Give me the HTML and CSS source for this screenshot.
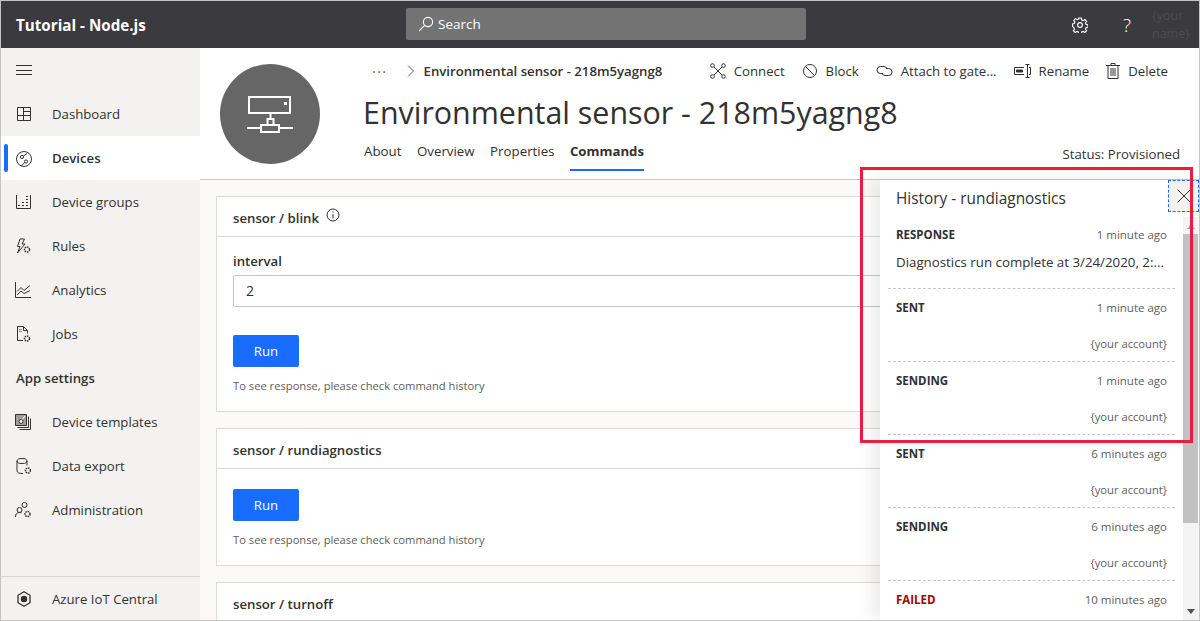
FILE: index.html
```html
<!DOCTYPE html>
<html lang="en">
<head>
    <meta charset="UTF-8">
    <title>Environmental sensor - 218m5yagng8</title>
    <link rel="stylesheet" href="styles.css">
</head>
<body>
<div class="app">
    <header class="topbar">
        <div class="app-name">Tutorial - Node.js</div>
        <div class="search">
            <svg class="search-ico" width="16" height="16" viewBox="0 0 16 16" fill="none" stroke="#fff" stroke-width="1.1"><circle cx="10" cy="6" r="4.6"/><path d="M6.6 9.4 1 15"/></svg>
            <span>Search</span>
        </div>
        <div class="top-tools">
            <svg width="16" height="16" viewBox="0 0 16 16" fill="none" stroke="#fff" stroke-width="1.1"><circle cx="8" cy="8" r="2.4"/><path d="M6.7 1h2.6l.4 2 1.4.6 1.8-1.1 1.7 1.8-1.1 1.7.6 1.4 1.9.4v2.4l-1.9.4-.6 1.4 1.1 1.7-1.7 1.8-1.8-1.1-1.4.6-.4 1.9H6.7l-.4-1.9-1.4-.6-1.8 1.1-1.7-1.8 1.1-1.7-.6-1.4L.4 9.3V6.9l1.9-.4.6-1.4-1.1-1.7 1.7-1.8 1.8 1.1 1.4-.6z"/></svg>
            <span class="help">?</span>
            <span class="user">{your<br>name}</span>
        </div>
    </header>
    <div class="body">
        <nav class="sidebar">
            <div class="burger"><svg width="16" height="11" viewBox="0 0 16 11" stroke="#323130"><path d="M0 .5h16M0 5.500h16M0 9.500h16"/></svg></div>
            <a class="nav-item"><svg class="nav-ico" width="16" height="16" viewBox="0 0 16 16" fill="none" stroke="#323130"><path d="M2.500 1.500h13v13h-13zM2.500 9.500h13M8.500 1.500v13M8.500 5.500h7"/></svg>Dashboard</a>
            <a class="nav-item active"><svg class="nav-ico" width="18" height="18" viewBox="0 0 18 18" fill="none" stroke="#323130"><circle cx="9" cy="9" r="7.500"/><circle cx="7" cy="7" r="1.600"/><circle cx="11" cy="11.500" r="1.600"/><path d="M8.500 6 12 3.500M9.800 12.500 6 16"/></svg>Devices</a>
            <a class="nav-item"><svg class="nav-ico" width="16" height="16" viewBox="0 0 16 16" fill="none" stroke="#323130"><path d="M1.500 1v13.500h14V1"/><path stroke-dasharray="2 2" d="M3 11.500h11M7 8.500h7M11 5.500h3M11 2.500h3"/></svg>Device groups</a>
            <a class="nav-item"><svg class="nav-ico" width="16" height="16" viewBox="0 0 16 16" fill="none" stroke="#323130"><path d="M5 1h4.500L7 6h3l-7.500 9L5 8.500H2.500z"/><circle cx="12" cy="11.500" r="2.500" stroke-width="1.500" stroke-dasharray="1.500 .8"/></svg>Rules</a>
            <a class="nav-item"><svg class="nav-ico" width="16" height="16" viewBox="0 0 16 16" fill="none" stroke="#323130"><path d="M.5 0v15.500h16M2 9.500l4-4 3 3 6-5M2 13l4-4 3 2.500 6-3"/></svg>Analytics</a>
            <a class="nav-item"><svg class="nav-ico" width="16" height="16" viewBox="0 0 16 16" fill="none" stroke="#323130"><path d="M8 14.500H2.500V.5h6l4 4v3M8.500.5v4h4"/><path stroke="#888" d="M4 3.500h3M4 5.500h3"/><circle cx="12" cy="12.500" r="2.500" stroke-width="1.500" stroke-dasharray="1.500 .8"/></svg>Jobs</a>
            <div class="nav-title">App settings</div>
            <a class="nav-item"><svg class="nav-ico" width="16" height="16" viewBox="0 0 16 16" fill="none" stroke="#323130"><path fill="#a19f9d" d="M.5.500h11v11H.5z"/><path d="M13.500 2.500v11h-11M15.500 4.500v11h-11"/><circle cx="6" cy="7.500" r="2" fill="#fff"/><path stroke="#fff" d="M7 5.500 10 2"/></svg>Device templates</a>
            <a class="nav-item"><svg class="nav-ico" width="16" height="16" viewBox="0 0 16 16" fill="none" stroke="#323130"><ellipse cx="7" cy="3" rx="5" ry="2.500"/><path d="M2 3v10c0 1.300 2 2.500 5 2.500h1M12 3v4.500"/><circle cx="13" cy="12.500" r="2.500" stroke-width="1.500" stroke-dasharray="1.500 .8"/></svg>Data export</a>
            <a class="nav-item"><svg class="nav-ico" width="16" height="16" viewBox="0 0 16 16" fill="none" stroke="#323130"><circle cx="9.500" cy="3" r="2.500"/><circle cx="4.500" cy="8" r="2.500"/><path d="M.5 15c0-3 1.500-4.500 4-4.500 1 0 1.500.2 2 .5"/><circle cx="12.500" cy="12" r="2.500" stroke-width="1.500" stroke-dasharray="1.500 .8"/></svg>Administration</a>
            <a class="nav-item nav-foot"><svg class="nav-ico" width="16" height="16" viewBox="0 0 16 16" fill="none" stroke="#323130" stroke-width="1.300"><path d="M9 .8l6 3.500v7.400L9 15.200l-6-3.500V4.300z"/><circle cx="9" cy="8" r="2.600" fill="#323130"/></svg>Azure IoT Central</a>
        </nav>
        <main class="main">
            <section class="device-head">
                <div class="avatar">
                    <svg width="46" height="38" viewBox="0 0 46 38" fill="none" stroke="#fff" stroke-width="2"><path d="M2 2h41v16H2zM23.500 18v6M20.500 30v-6h6v6M14 37v-7h18v7zM0 33h14M32 33h14"/><path d="M37 7h3v3h-3z" fill="#fff" stroke="none"/></svg>
                </div>
                <div class="head-info">
                    <div class="crumb-row">
                        <div class="crumbs">
                            <span class="dots">···</span>
                            <svg width="10" height="14" viewBox="0 0 10 14" fill="none" stroke="#605e5c"><path d="M3 1.500l5.500 5.500L3 12.500"/></svg>
                            <span>Environmental sensor - 218m5yagng8</span>
                        </div>
                        <div class="actions">
                            <a class="action"><svg width="16" height="16" viewBox="0 0 16 16" fill="none" stroke="#323130"><circle cx="2.500" cy="2.500" r="1.800"/><circle cx="13.500" cy="2.500" r="1.800"/><circle cx="2.500" cy="13.500" r="1.800"/><circle cx="13.500" cy="13.500" r="1.800"/><path d="M4 4l8 8M12 4l-8 8"/></svg>Connect</a>
                            <a class="action"><svg width="16" height="16" viewBox="0 0 16 16" fill="none" stroke="#323130"><circle cx="8" cy="8" r="6.500"/><path d="M3.500 3.500l9 9"/></svg>Block</a>
                            <a class="action"><svg width="17" height="12" viewBox="0 0 17 12" fill="none" stroke="#323130"><path d="M7 8.500H4.500a3.500 3.500 0 0 1 0-7H8a3.500 3.500 0 0 1 3 2"/><path d="M10 3.500h2.500a3.500 3.500 0 0 1 0 7H9a3.500 3.500 0 0 1-3-2"/></svg>Attach to gate...</a>
                            <a class="action"><svg width="17" height="14" viewBox="0 0 17 14" fill="none" stroke="#323130"><path d="M10 3.500H.5v7H10"/><path fill="#323130" d="M2.500 6h6v2h-6z"/><path d="M13.500 1v12M11.500.5h4M11.500 13.500h4M15 3.500h1.500v7H15"/></svg>Rename</a>
                            <a class="action"><svg width="14" height="16" viewBox="0 0 14 16" fill="none" stroke="#323130"><path d="M0 2.500h14M5 2.500v-2h4v2M2 2.500v13h10v-13M5 5v8M7 5v8M9 5v8"/></svg>Delete</a>
                        </div>
                    </div>
                    <h1 class="title">Environmental sensor - 218m5yagng8</h1>
                    <div class="tab-row">
                        <div class="tabs">
                            <a class="tab">About</a>
                            <a class="tab">Overview</a>
                            <a class="tab">Properties</a>
                            <a class="tab current">Commands</a>
                        </div>
                        <div class="status">Status: Provisioned</div>
                    </div>
                </div>
            </section>
            <section class="content">
                <div class="card">
                    <div class="card-head">sensor / blink
                        <svg class="info" width="14" height="14" viewBox="0 0 14 14" fill="none" stroke="#323130"><circle cx="7" cy="7" r="6"/><path d="M7 6v4.500M7 3.500v1.200"/></svg>
                    </div>
                    <div class="card-body">
                        <label class="field-label">interval</label>
                        <div class="field">2</div>
                        <button class="run">Run</button>
                        <p class="hint">To see response, please check command history</p>
                    </div>
                </div>
                <div class="card">
                    <div class="card-head">sensor / rundiagnostics</div>
                    <div class="card-body">
                        <button class="run no-field">Run</button>
                        <p class="hint">To see response, please check command history</p>
                    </div>
                </div>
                <div class="card">
                    <div class="card-head">sensor / turnoff</div>
                </div>
            </section>
        </main>
    </div>

    <aside class="history">
        <div class="history-title">History - rundiagnostics</div>
        <button class="close"><svg width="14" height="14" viewBox="0 0 14 14" stroke="#323130"><path d="M.5.500l13 13M13.500.500l-13 13"/></svg></button>
        <div class="history-scroll">
            <div class="entry">
                <div class="entry-top"><b>RESPONSE</b><span>1 minute ago</span></div>
                <div class="entry-msg">Diagnostics run complete at 3/24/2020, 2:...</div>
            </div>
            <div class="entry">
                <div class="entry-top"><b>SENT</b><span>1 minute ago</span></div>
                <div class="entry-who">{your account}</div>
            </div>
            <div class="entry">
                <div class="entry-top"><b>SENDING</b><span>1 minute ago</span></div>
                <div class="entry-who">{your account}</div>
            </div>
            <div class="entry">
                <div class="entry-top"><b>SENT</b><span>6 minutes ago</span></div>
                <div class="entry-who">{your account}</div>
            </div>
            <div class="entry">
                <div class="entry-top"><b>SENDING</b><span>6 minutes ago</span></div>
                <div class="entry-who">{your account}</div>
            </div>
            <div class="entry">
                <div class="entry-top"><b class="failed">FAILED</b><span>10 minutes ago</span></div>
            </div>
        </div>
        <div class="scrollbar">
            <svg width="8" height="5" viewBox="0 0 8 5" fill="#a6a6a6"><path d="M4 0l4 5H0z"/></svg>
            <div class="thumb"></div>
            <svg class="arrow-down" width="8" height="5" viewBox="0 0 8 5" fill="#505050"><path d="M0 0h8L4 5z"/></svg>
        </div>
    </aside>
    <div class="highlight"></div>
</div>
</body>
</html>
```

FILE: styles.css
```css
*{
    margin: 0;
    padding: 0;
    box-sizing: border-box;
}
html,body{
    height: 100%;
    overflow: hidden;
}
body{
    font-family: "Open Sans", "Liberation Sans", sans-serif;
    font-size: 13.2px;
    color: #323130;
}
.app{
    width: 1200px;
    height: 621px;
    position: relative;
    overflow: hidden;
    border: 1px solid #c4c4c4;
    display: flex;
    flex-direction: column;
}

/* top bar */
.topbar{
    height: 47px;
    flex: none;
    background: #3b3a3f;
    color: #fff;
    display: flex;
    align-items: center;
}
.app-name{
    width: 405px;
    padding-left: 15px;
    font-size: 15.2px;
    font-weight: 700;
}
.search{
    width: 400px;
    height: 32px;
    margin-top: -1px;
    background: #737373;
    border-radius: 2px;
    display: flex;
    align-items: center;
    padding-left: 12px;
    gap: 4px;
    font-size: 13.5px;
}
.top-tools{
    flex: 1;
    display: flex;
    align-items: center;
    padding-left: 266px;
}
.help{
    margin-left: 35px;
    font-size: 19px;
    font-weight: 300;
}
.user{
    margin-left: 21px;
    color: #4e4d52;
    font-size: 12.5px;
    line-height: 18px;
}

/* sidebar */
.body{
    flex: 1;
    display: flex;
    min-height: 0;
}
.sidebar{
    width: 199px;
    flex: none;
    background: #f3f2f1;
    display: flex;
    flex-direction: column;
}
.burger{
    height: 44px;
    padding: 1px 0 0 15px;
    display: flex;
    align-items: center;
}
.nav-item{
    height: 44px;
    flex: none;
    display: flex;
    align-items: center;
    padding-left: 51px;
    position: relative;
}
.nav-ico{
    position: absolute;
    left: 14px;
    top: 14px;
}
.nav-item.active{
    background: #fff;
    font-weight: 600;
}
.nav-item.active::before{
    content: "";
    position: absolute;
    left: 3px;
    top: 8px;
    width: 4px;
    height: 28px;
    border-radius: 2px;
    background: #1a6cff;
}
.nav-title{
    height: 44px;
    flex: none;
    display: flex;
    align-items: center;
    padding-left: 15px;
    font-weight: 600;
}
.nav-foot{
    margin-top: auto;
    border-top: 1px solid #d8d7d6;
}

/* device header */
.main{
    flex: 1;
    min-width: 0;
    display: flex;
    flex-direction: column;
}
.device-head{
    height: 132px;
    flex: none;
    background: #fff;
    border-bottom: 1px solid #c8c6c4;
    display: flex;
    padding: 16px 19px 0 20px;
    gap: 43px;
}
.avatar{
    width: 100px;
    height: 100px;
    flex: none;
    border-radius: 50%;
    background: #666;
    display: flex;
    align-items: center;
    justify-content: center;
}
.head-info{
    flex: 1;
    min-width: 0;
    margin-top: -8px;
}
.crumb-row{
    display: flex;
    justify-content: space-between;
    align-items: center;
    height: 30px;
    padding-right: 12px;
}
.crumbs{
    display: flex;
    align-items: center;
    font-weight: 600;
    font-size: 13.2px;
    gap: 9px;
}
.dots{
    font-weight: 400;
    color: #605e5c;
    margin: 0 8px 0 9px;
    font-size: 14px;
    letter-spacing: 1.5px;
}
.actions{
    display: flex;
    align-items: center;
    gap: 17px;
}
.action{
    display: flex;
    align-items: center;
    gap: 8px;
}
.title{
    font-size: 30.4px;
    font-weight: 400;
    line-height: 42px;
    margin-top: 6px;
}
.tab-row{
    display: flex;
    justify-content: space-between;
    margin-top: 3px;
}
.tabs{
    display: flex;
    gap: 15.5px;
    padding-left: 1px;
}
.tab{
    height: 34px;
    line-height: 28px;
    font-size: 13.3px;
}
.tab.current{
    font-size: 13.2px;
    font-weight: 700;
    border-bottom: 2px solid #1a6cff;
}
.status{
    margin-top: 5px;
    line-height: 24px;
}

/* command cards */
.content{
    flex: 1;
    min-height: 0;
    overflow: hidden;
    background: #faf9f8;
    padding: 16px 16px 0;
    display: flex;
    flex-direction: column;
    gap: 16px;
}
.card{
    flex: none;
    background: #fff;
    border: 1px solid #dcdbda;
}
.card-head{
    height: 40px;
    padding: 3px 16px 0;
    display: flex;
    align-items: center;
    gap: 7px;
    font-weight: 600;
    border-bottom: 1px solid #dcdbda;
}
.info{
    margin-top: -6px;
}
.card-body{
    padding: 14px 16px 16px;
}
.field-label{
    display: block;
    font-weight: 600;
    line-height: 20px;
}
.field{
    margin-top: 4px;
    height: 32px;
    border: 1px solid #c8c6c4;
    border-radius: 2px;
    padding-left: 12px;
    font-size: 14px;
    line-height: 30px;
}
.run{
    display: block;
    width: 66px;
    height: 32px;
    margin-top: 28px;
    background: #1a6cff;
    color: #fff;
    border: 0;
    border-radius: 2px;
    font: inherit;
}
.run.no-field{
    margin-top: 6px;
}
.hint{
    margin-top: 10px;
    font-size: 11.2px;
    line-height: 18px;
    color: #605e5c;
}

/* history flyout, over the cards */
.history{
    position: absolute;
    left: 879px;
    top: 179px;
    right: 0;
    bottom: 0;
    background: #fff;
    box-shadow: -8px 0 16px rgba(0,0,0,0.08);
}
.history-title{
    font-size: 15.4px;
    line-height: 37px;
    height: 36px;
    padding-left: 16px;
}
.close{
    position: absolute;
    right: 0;
    top: 0;
    width: 31px;
    height: 32px;
    background: #f3f2f1;
    border: 1px dashed #1a6cff;
    display: flex;
    align-items: center;
    justify-content: center;
}
.history-scroll{
    padding: 0 16px 0 8px;
    width: 311px;
}
.entry{
    padding: 9px 8px 0;
    height: 73px;
    border-bottom: 1px dashed #c8c6c4;
    font-size: 11.5px;
    color: #605e5c;
}
.entry:last-child{
    border-bottom: 0;
}
.entry-top{
    display: flex;
    justify-content: space-between;
    line-height: 20px;
}
.entry-top b{
    font-weight: 700;
    color: #323130;
}
.entry-top b.failed{
    color: #a80000;
}
.entry-msg{
    margin-top: 8px;
    font-size: 13.3px;
    color: #323130;
    white-space: nowrap;
}
.entry-who{
    margin-top: 17px;
    text-align: right;
    font-size: 11.2px;
    line-height: 18px;
}
.scrollbar{
    position: absolute;
    right: 1px;
    top: 37px;
    bottom: 0;
    width: 15px;
    background: #f3f3f3;
    text-align: center;
    line-height: 0;
    padding-top: 7px;
}
.thumb{
    height: 289px;
    margin-top: 5px;
    background: #c1c1c1;
}
.arrow-down{
    position: absolute;
    left: 4px;
    bottom: 6px;
}

.highlight{
    position: absolute;
    left: 859px;
    top: 166px;
    width: 333px;
    height: 276px;
    border: 3px solid #ed1c3e;
    pointer-events: none;
}
```
